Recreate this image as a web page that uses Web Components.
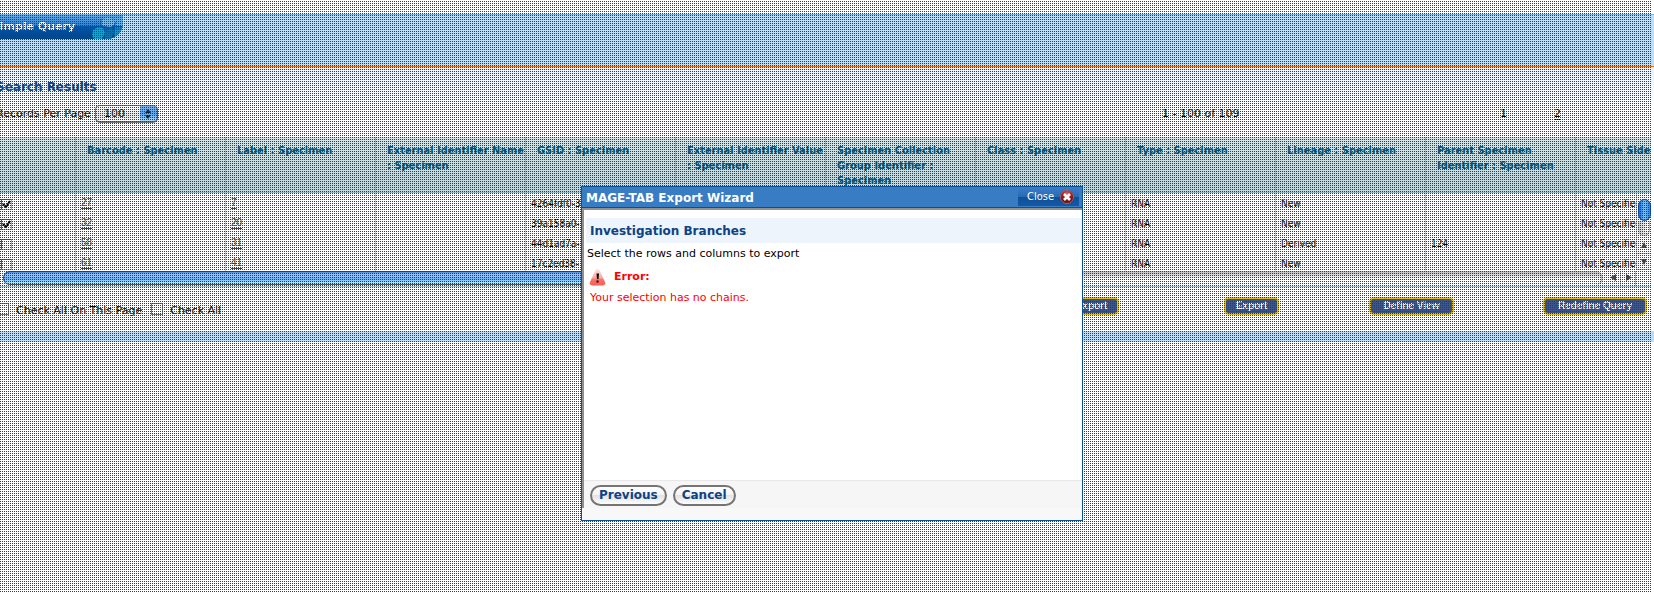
<!DOCTYPE html>
<html lang="en">
<head>
<meta charset="utf-8">
<title>Simple Query</title>
<style>
  body { margin: 0; background: #fff; font: 11px/14px "DejaVu Sans", Verdana, sans-serif; color: #000; }
</style>
</head>
<body>
<query-page></query-page>
<script>
const define = (name, html, setup) => customElements.define(name, class extends HTMLElement {
  connectedCallback() {
    if (this.shadowRoot) return;
    const template = document.createElement('template');
    template.innerHTML = html;
    this.attachShadow({ mode: 'open' }).append(template.content.cloneNode(true));
    if (setup) setup(this, this.shadowRoot);
  }
});

/* Blue band with the page's tab */
define('page-banner', `
<style>
  :host { display: block; margin-top: 14px; height: 51px; border-top: 1px solid #7fb2de; border-bottom: 1px solid #f07010;
    background: #bddcf5; }
  .tab { position: relative; display: flex; align-items: center; width: 123px; height: 24px; overflow: hidden;
    border-radius: 0 0 16px 0; background: linear-gradient(#65aae6, #2f7fd0 45%, #0058ae 46%, #004488); }
  h1 { margin: 0; width: 75px; display: flex; justify-content: flex-end; font-size: 11px; line-height: 14px; color: #fff; white-space: nowrap; }
  svg { position: absolute; right: 0; top: 0; }
</style>
<div class="tab"><h1>Simple Query</h1>
<svg width="32" height="24" viewBox="0 0 32 24" aria-hidden="true">
  <path d="M11 5l5-3 6 2 2 5-4 3-7-1-3-2z" fill="#7ab8e4"/>
  <path d="M23 3h9v8h-6l-3-3z" fill="#62aee6"/>
  <path d="M2 15l5-3 5 1 2 5-3 6H3l-2-4z" fill="#14a0cc"/>
  <path d="M14 15l6-2 3 4-3 7h-6z" fill="#0c74ae"/>
  <path d="M24 12h8v12h-9z" fill="#1492c8"/>
  <path d="M10 4v6l4 3 8-1 3-5M14 12l1 4 5 2 4-4h8M15 16l-3 8" fill="none" stroke="#1a62a8" stroke-width="1"/>
</svg></div>`);

/* Records per page and page links */
define('results-pager', `
<style>
  :host { display: flex; align-items: center; height: 18px; white-space: nowrap; }
  label { display: flex; align-items: center; gap: 4px; width: 1166px; }
  select { appearance: none; box-sizing: border-box; width: 63px; height: 18px; margin: 0; padding: 0 0 0 8px; font: inherit; color: #111;
    border: 1px solid #777; border-right-color: #36549c; border-radius: 5px; border-bottom-width: 2px;
    background: url("data:image/svg+xml,%3Csvg xmlns='http://www.w3.org/2000/svg' width='17' height='16'%3E%3Cdefs%3E%3ClinearGradient id='g' x2='0' y2='1'%3E%3Cstop stop-color='%237eb2ea'/%3E%3Cstop offset='.5' stop-color='%2360a4ea'/%3E%3Cstop offset='1' stop-color='%23b4e4ff'/%3E%3C/linearGradient%3E%3C/defs%3E%3Cpath fill='url(%23g)' d='M0 0h17v16H0z'/%3E%3Cpath d='M8 3l3 4H5zM8 13l3-4H5z' fill='%23123'/%3E%3C/svg%3E") right top no-repeat, linear-gradient(#fff, #e6e6e6 60%, #fafafa); }
  .range { width: 338px; }
  .page { width: 54px; }
  a { color: #000; text-decoration: underline; text-underline-offset: 2px; }
</style>
<label>Records Per Page <select><option>100</option></select></label>
<span class="range">1 - 100 of 109</span><span class="page">1</span><a href="#2">2</a>`);

/* Results table with its two scroll bars */
define('results-grid', `
<style>
  :host { display: block; position: relative; margin-right: 3px; overflow: hidden; border-bottom: 1px solid #a9c6d2; }
  .view { height: 134px; overflow: hidden; }
  table { table-layout: fixed; width: 1726px; border-collapse: separate; border-spacing: 0; }
  th { box-sizing: border-box; height: 56px; padding: 6px 0 0 11px; text-align: left; vertical-align: top; white-space: nowrap;
    font: bold 11px/15px "DejaVu Sans Condensed", Tahoma, sans-serif; color: #005078;
    background: linear-gradient(#d3e3e5, #bed5dc); border-right: 1px solid #a3b5b8; border-bottom: 1px solid #96b9c8; }
  td { box-sizing: border-box; height: 20px; padding: 2px 0 0 5px; font: 10px/16px "DejaVu Sans Condensed", Tahoma, sans-serif;
    white-space: nowrap; overflow: hidden; border-right: 1px solid #c8c8c8; }
  th:first-child, td:first-child { padding-left: 1px; }
  td a { font: 10px/12px "Liberation Sans", Arial, sans-serif; color: #444; vertical-align: 1px; text-underline-offset: 2px; }
  input { appearance: none; display: block; box-sizing: border-box; width: 11px; height: 11px; margin: 0; border: 1px solid #aaa;
    border-top-color: #555; border-left-color: #555; background: #fff; }
  input:checked { background: url("data:image/svg+xml,%3Csvg xmlns='http://www.w3.org/2000/svg' width='9' height='9'%3E%3Cpath d='M1 4l3 3 4-6' fill='none' stroke='%23000' stroke-width='2'/%3E%3C/svg%3E"); }
  .vbar { position: absolute; right: 0; top: 56px; bottom: 16px; width: 15px; display: flex; flex-direction: column; align-items: center;
    background: #fafafa; border-left: 1px solid #ccc; box-sizing: border-box; }
  .vthumb { box-sizing: border-box; width: 13px; height: 22px; margin-top: 6px; border: 1px solid #07419c; border-radius: 7px;
    background: linear-gradient(90deg, #1a6ad8, #7cc4f8 50%, #2f84e4); }
  .vtrack { flex: 1; width: 12px; border-radius: 0 0 7px 7px; border: 1px solid #bbb; border-top: 0; background: linear-gradient(90deg, #ccc, #fff); box-sizing: border-box; }
  .hbar { display: flex; height: 15px; align-items: flex-start; margin-right: 15px; }
  .hthumb { box-sizing: border-box; width: 1010px; height: 14px; margin-left: 3px; border: 1px solid #555; border-top: 1px solid #0446a8;
    border-radius: 7px 0 0 7px; border-left-color: #07419c; background: linear-gradient(#4a8ee0, #a6c8f0 25%, #6fb0f4 55%, #b4f0ff); }
  .htrack { flex: 1; height: 14px; box-sizing: border-box; border-right: 2px solid #bbb; border-radius: 0 7px 7px 0;
    background: linear-gradient(#b8b8b8, #fff 60%); }
  svg { display: block; }
</style>
<div class="view"><table>
  <colgroup><col style="width:76px"></colgroup>
  <thead><tr></tr></thead><tbody></tbody>
</table></div>
<div class="hbar"><div class="hthumb"></div><div class="htrack"></div>
  <svg width="33" height="15" viewBox="0 0 33 15"><path d="M13 3v7l-6-3.500zM23 3v7l6-3.500z" fill="#444"/><path d="M17.500 0v15M32.500 0v15" stroke="#bbb"/></svg></div>
<div class="vbar"><div class="vthumb"></div><div class="vtrack"></div>
  <svg width="14" height="34" viewBox="0 0 14 34"><path d="M4 12h6L7 6zM4 23h6l-3 6z" fill="#444"/><path d="M0 17.500h14M0 33.500h14" stroke="#bbb"/></svg></div>`,
(host, root) => {
  const heads = ['', 'Barcode : Specimen', 'Label : Specimen', 'External Identifier Name<br>: Specimen', 'GSID : Specimen',
    'External Identifier Value<br>: Specimen', 'Specimen Collection<br>Group Identifier :<br>Specimen', 'Class : Specimen', 'Type : Specimen',
    'Lineage : Specimen', 'Parent Specimen<br>Identifier : Specimen', 'Tissue Side'];
  const rows = [[1, '27', '7', '4264fdf0-3', 'New', ''], [1, '32', '20', '39a158a0-', 'New', ''],
    [0, '58', '31', '44d1ad7a-', 'Derived', '124'], [0, '61', '41', '17c2ed38-', 'New', '']];
  root.querySelector('thead tr').innerHTML = heads.map(h => `<th scope="col">${h}</th>`).join('');
  root.querySelector('tbody').innerHTML = rows.map(([on, code, label, gsid, lineage, parent]) =>
    `<tr><td><input type="checkbox" aria-label="Select ${code}"${on ? ' checked' : ''}></td>
    <td><a href="#s${code}">${code}</a></td><td><a href="#l${label}">${label}</a></td><td></td><td>${gsid}</td>
    <td></td><td></td><td></td><td>RNA</td><td>${lineage}</td><td>${parent}</td><td>Not Specified</td></tr>`).join('');
});

/* Bulk tick boxes and action buttons */
define('results-actions', `
<style>
  :host { display: flex; justify-content: space-between; align-items: flex-start; height: 34px; padding: 10px 7px 0 0; white-space: nowrap; }
  .checks { display: flex; gap: 9px; padding-top: 6px; margin-left: -3px; }
  label { display: flex; align-items: center; gap: 7px; }
  input { appearance: none; box-sizing: border-box; width: 12px; height: 12px; margin: 0 0 4px; border: 1px solid #777; background: #fff; }
  .buttons { display: grid; grid-template-columns: 60px 160px 175px 193px; justify-items: end; }
  button { box-sizing: border-box; height: 18px; min-width: 55px; margin: 0; padding: 0 8px; border: 2px solid #e2bb10; border-radius: 5px;
    background: #3d5488; color: #fff; font: bold 10px/14px "Liberation Sans", Arial, sans-serif; }
  .mid { min-width: 85px; }
  .wide { min-width: 104px; }
</style>
<div class="checks"><label><input type="checkbox">Check All On This Page</label><label><input type="checkbox">Check All</label></div>
<div class="buttons"><button>Export</button><button>Export</button><button class="mid">Define View</button><button class="wide">Redefine Query</button></div>`);

/* Stippled veil that greys the page while the wizard is open */
define('stipple-veil', `
<style>
  :host { display: block; position: absolute; inset: 0 3px 0 0; }
  svg { display: block; width: 100%; height: 100%; }
</style>
<svg aria-hidden="true" shape-rendering="crispEdges"><defs><pattern id="dots" width="2" height="2" patternUnits="userSpaceOnUse">
<rect x="0" y="1" width="1" height="1" fill="#3c3c3c"/></pattern></defs><rect width="100%" height="100%" fill="url(#dots)"/></svg>`);

define('wizard-dialog', `
<style>
  :host { display: block; box-sizing: border-box; width: 502px; border: 1px solid #0b4f94; background: #f8f8f8; }
  header { display: flex; align-items: center; justify-content: space-between; height: 20px; padding: 0 3px 0 4px; background: #387cc4; border-bottom: 1px solid #0b4f94; }
  h2, h3 { margin: 0; font-size: 12px; line-height: 16px; }
  h2 { color: #fff; padding-top: 1px; }
  .close { display: flex; align-items: center; gap: 5px; height: 18px; margin: 0; padding: 0 4px 0 9px; border: 0; color: #fff;
    font: 11px/16px "DejaVu Sans Condensed", Tahoma, sans-serif; background: linear-gradient(#3a7cc4, #2769b4 50%, #0f4f98 51%, #1458a4); }
  .frame { border-top: 2px solid #909090; border-left: 2px solid #909090; background: #fff; }
  .body { height: 270px; padding-top: 8px; box-sizing: border-box; }
  h3 { margin-left: 2px; padding: 5px 4px 4px; color: #0d4284; background: #edf4fc; }
  footer { display: flex; gap: 6px; height: 21px; padding: 4px 6px 2px; border-top: 1px solid #e8e8e8; background: #f6f6f6; }
  .end { height: 12px; }
</style>
<header><h2>MAGE-TAB Export Wizard</h2>
<button class="close">Close <svg width="16" height="16" viewBox="0 0 16 16" aria-hidden="true">
<defs><radialGradient id="r" cy=".3"><stop stop-color="#e07070"/><stop offset=".6" stop-color="#a82020"/><stop offset="1" stop-color="#701010"/></radialGradient></defs>
<circle cx="8" cy="8" r="7" fill="url(#r)"/><circle cx="8" cy="8" r="6.500" fill="none" stroke="#9c6878" stroke-width="1"/>
<path d="M5 5l6 6M11 5l-6 6" stroke="#fff" stroke-width="2.600"/></svg></button></header>
<div class="frame"><div class="body"><h3>Investigation Branches</h3><slot></slot></div>
<footer><pill-button>Previous</pill-button><pill-button>Cancel</pill-button></footer></div>
<div class="end"></div>`);

define('pill-button', `
<style>
  :host { display: block; }
  button { display: block; box-sizing: border-box; height: 21px; margin: 0; padding: 0 7px; border: 2px solid #747474; border-radius: 11px; color: #0d4284;
    font: bold 12px/17px "DejaVu Sans", Verdana, sans-serif; background: linear-gradient(#fff, #f4f4f4 45%, #e2e2e2 50%, #fdfdfd); }
</style><button><slot></slot></button>`);

define('error-message', `
<style>
  :host { display: block; padding: 4px 3px 0; color: #f00; }
  p { margin: 0; }
  .lead { margin: 0 0 7px; color: #000; }
  .title { display: flex; align-items: center; gap: 8px; height: 18px; margin-left: 2px; font-weight: bold; }
  .text { margin: 5px 0 0 3px; }
</style>
<p class="lead"><slot name="lead"></slot></p>
<p class="title"><svg width="17" height="18" viewBox="0 0 17 18" aria-hidden="true">
<defs><linearGradient id="w" x2="0" y2="1"><stop stop-color="#ffe8e4"/><stop offset=".55" stop-color="#f8a8a0"/><stop offset=".65" stop-color="#f87068"/><stop offset="1" stop-color="#ff5c54"/></linearGradient></defs>
<path d="M6.500 2Q8.500-.5 10.500 2L16 14Q17 17 14 17.500H3Q0 17 1 14z" fill="url(#w)"/><path d="M7.500 5.500h2.500l-.5 5.500h-1.500zM7.500 12.500h2v2h-2z" fill="#000"/></svg>Error:</p>
<p class="text"><slot></slot></p>`);

define('query-page', `
<style>
  :host { display: block; position: relative; min-height: 100vh; overflow: hidden; }
  .top { height: 70px; padding-top: 13px; box-sizing: border-box; margin-left: -4px; background: linear-gradient(#e6f1fb, #fff 40px); }
  h2 { margin: 0 0 10px; font-size: 12px; line-height: 15px; color: #0d4284; }
  .strip { height: 11px; background: #bddcf5; }
  wizard-dialog { position: absolute; left: calc(50% - 246px); top: 186px; }
</style>
<page-banner></page-banner>
<div class="top"><h2>Search Results</h2><results-pager></results-pager></div>
<results-grid></results-grid>
<results-actions></results-actions>
<div class="strip"></div>
<stipple-veil></stipple-veil>
<wizard-dialog><error-message><span slot="lead">Select the rows and columns to export</span>Your selection has no chains.</error-message></wizard-dialog>`);
</script>
</body>
</html>
